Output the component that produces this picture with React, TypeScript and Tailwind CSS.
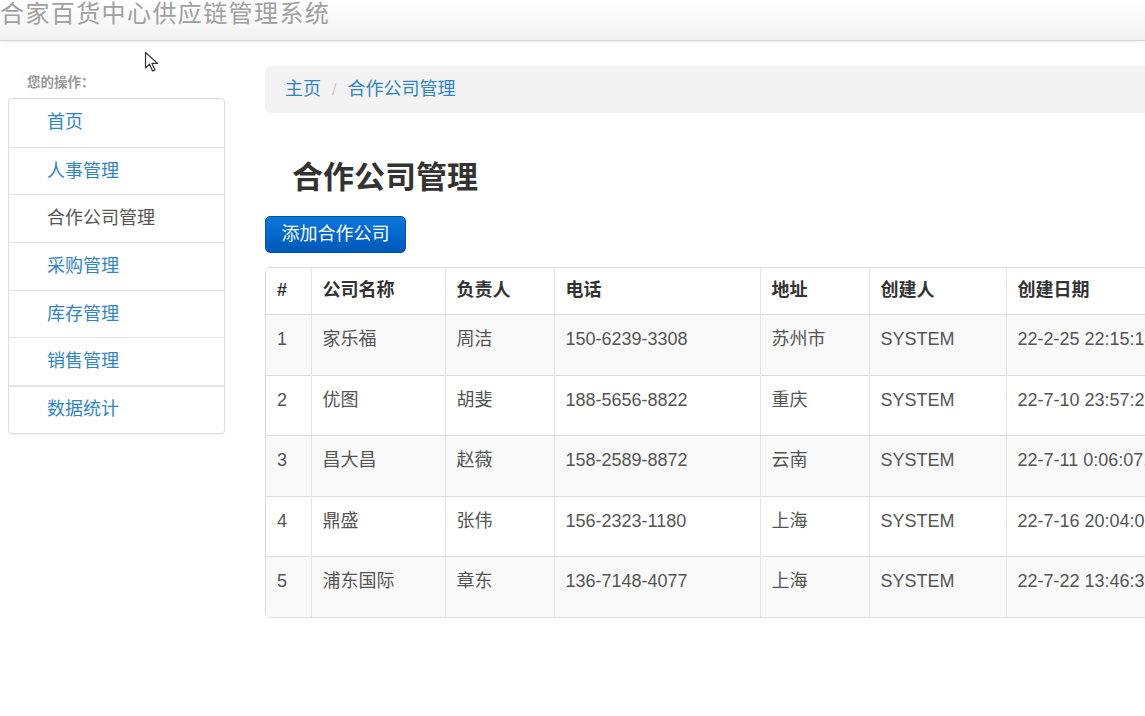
import React from "react";

const MENU = [
  { label: "首页", active: false },
  { label: "人事管理", active: false },
  { label: "合作公司管理", active: true },
  { label: "采购管理", active: false },
  { label: "库存管理", active: false },
  { label: "销售管理", active: false },
  { label: "数据统计", active: false },
];

const HEADS = ["#", "公司名称", "负责人", "电话", "地址", "创建人", "创建日期"];
const WIDTHS = ["w-[45px]", "w-[134px]", "w-[109px]", "w-[206px]", "w-[109px]", "w-[137px]", "w-[220px]"];

const ROWS = [
  ["1", "家乐福", "周洁", "150-6239-3308", "苏州市", "SYSTEM", "22-2-25 22:15:14"],
  ["2", "优图", "胡斐", "188-5656-8822", "重庆", "SYSTEM", "22-7-10 23:57:25"],
  ["3", "昌大昌", "赵薇", "158-2589-8872", "云南", "SYSTEM", "22-7-11 0:06:07.0"],
  ["4", "鼎盛", "张伟", "156-2323-1180", "上海", "SYSTEM", "22-7-16 20:04:03"],
  ["5", "浦东国际", "章东", "136-7148-4077", "上海", "SYSTEM", "22-7-22 13:46:36"],
];
const ROW_H = ["h-[61px]", "h-[60px]", "h-[61px]", "h-[60px]", "h-[61px]"];

function Cursor() {
  return (
    <svg className="absolute left-[144px] top-[51px]" width="16" height="22" viewBox="0 0 16 22">
      <path d="M1.5 1.5 L1.5 17 L5.5 13.2 L8.6 20 L11 19 L8 12.4 L13.5 12.4 Z" fill="#fff" stroke="#333" strokeWidth="1.2" strokeLinejoin="round" />
    </svg>
  );
}

export default function App() {
  return (
    <div className="relative w-[1145px] h-[716px] overflow-hidden bg-white font-['Liberation_Sans','Noto_Sans_CJK_SC',sans-serif]">
      <header className="h-[41px] border-b border-[#d5d5d5] bg-gradient-to-b from-white to-[#f2f2f2] shadow-[0_1px_3px_rgba(0,0,0,0.08)]">
        <div className="text-[24px] tracking-[1.4px] leading-[28px] text-[#a0a0a0] whitespace-nowrap">合家百货中心供应链管理系统</div>
      </header>

      <div className="flex">
        <aside className="w-[225px] shrink-0 pl-[8px]">
          <div className="mt-[33px] pl-[19px] text-[13.5px] leading-[18px] font-bold text-[#999]">您的操作：</div>
          <ul className="mt-[6px] rounded-[4px] border border-[#ddd] bg-white shadow-[0_1px_2px_rgba(0,0,0,0.05)]">
            {MENU.map((m, i) => (
              <li
                key={m.label}
                className={
                  "h-[47.7px] flex items-center pl-[38px] text-[18px] " +
                  (i === 0 ? "" : i === 6 ? "border-t-2 border-[#e3e3e3] " : "border-t border-[#e3e3e3] ") +
                  (m.active ? "text-[#555]" : "text-[#2f84c6]")
                }
              >
                {m.label}
              </li>
            ))}
          </ul>
        </aside>

        <main className="ml-[40px] w-[1000px] shrink-0">
          <nav className="mt-[25px] h-[47px] rounded-[5px] bg-[#f3f3f3] flex items-center pl-[20px] text-[18px]">
            <span className="text-[#2f84c6]">主页</span>
            <span className="px-[11px] text-[#ccc] text-[16px]">/</span>
            <span className="text-[#2f84c6]">合作公司管理</span>
          </nav>

          <h1 className="mt-[47px] ml-[27px] text-[31px] leading-[35px] font-bold text-[#333]">合作公司管理</h1>

          <button className="mt-[21px] h-[37px] w-[141px] rounded-[5px] border border-[#0652a8] bg-gradient-to-b from-[#0c78dc] to-[#0057b9] text-[18px] text-white">
            添加合作公司
          </button>

          <div className="mt-[14px] w-[1200px] rounded-[5px] border border-[#ddd] overflow-hidden">
            <table className="w-[1198px] border-collapse table-fixed text-[18px]">
              <colgroup>
                {WIDTHS.map((w, i) => (
                  <col key={i} className={w} />
                ))}
                <col className="w-[240px]" />
              </colgroup>
              <thead>
                <tr className="h-[46px] bg-white">
                  {HEADS.map((h, i) => (
                    <th key={h} className={"text-left font-bold text-[#333] px-[11px] align-middle " + (i > 0 ? "border-l border-[#e6e6e6]" : "")}>
                      {h}
                    </th>
                  ))}
                  <th className="border-l border-[#e6e6e6]"></th>
                </tr>
              </thead>
              <tbody>
                {ROWS.map((r, ri) => (
                  <tr key={r[0]} className={ROW_H[ri] + " border-t border-[#ddd] " + (ri % 2 === 0 ? "bg-[#f9f9f9]" : "bg-white")}>
                    {r.map((c, ci) => (
                      <td key={ci} className={"align-top pt-[11px] px-[11px] text-[#555] whitespace-nowrap overflow-hidden " + (ci > 0 ? "border-l border-[#e6e6e6]" : "")}>
                        {c}
                      </td>
                    ))}
                    <td className="border-l border-[#e6e6e6]"></td>
                  </tr>
                ))}
              </tbody>
            </table>
          </div>
        </main>
      </div>

      <Cursor />
    </div>
  );
}
